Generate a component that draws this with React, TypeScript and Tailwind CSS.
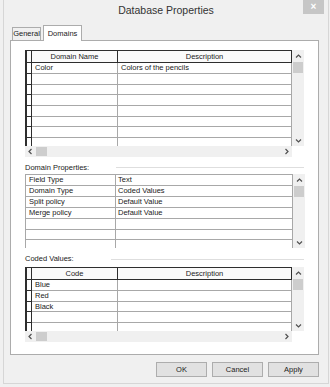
import React from "react";

type Dir = "up" | "down" | "left" | "right";

function Chevron({ dir }: { dir: Dir }) {
  const paths: Record<Dir, string> = {
    up: "M1 4.5 L3.5 2 L6 4.5",
    down: "M1 2.5 L3.5 5 L6 2.5",
    left: "M4.5 1 L2 3.5 L4.5 6",
    right: "M2.5 1 L5 3.5 L2.5 6",
  };
  return (
    <svg width="7" height="7" viewBox="0 0 7 7">
      <path d={paths[dir]} fill="none" stroke="#505050" strokeWidth="1.2" />
    </svg>
  );
}

function VScroll() {
  return (
    <div className="w-[12px] h-full flex flex-col bg-[#f0f0f0]">
      <div className="h-[12px] flex items-center justify-center">
        <Chevron dir="up" />
      </div>
      <div className="h-[11px] mx-[1px] bg-[#cdcdcd]" />
      <div className="flex-1" />
      <div className="h-[11px] flex items-center justify-center">
        <Chevron dir="down" />
      </div>
    </div>
  );
}

function HScroll() {
  return (
    <div className="flex-1 h-full flex bg-[#f0f0f0]">
      <div className="w-[11px] flex items-center justify-center">
        <Chevron dir="left" />
      </div>
      <div className="w-[11px] my-[1px] bg-[#cdcdcd]" />
      <div className="flex-1" />
      <div className="w-[11px] flex items-center justify-center">
        <Chevron dir="right" />
      </div>
    </div>
  );
}

const rowH = ["h-[11px]", "h-[11px]", "h-[10px]", "h-[11px]", "h-[11px]", "h-[10px]", "h-[11px]", "h-[11px]"];

function HeaderGrid({
  col1,
  col2,
  rows,
  height,
}: {
  col1: string;
  col2: string;
  rows: [string, string][];
  height: string;
}) {
  const all: [string, string][] = [...rows];
  while (all.length < 8) all.push(["", ""]);
  return (
    <div className={`flex flex-col ${height}`}>
      <div className="flex flex-1 min-h-0">
        <div className="w-[267px] overflow-hidden flex flex-col bg-white">
          <div className="flex h-[13px] shrink-0 border-y border-[#2e2e2e] bg-[#fafafa]">
            <div className="w-[7px] border-l-2 border-r border-[#2e2e2e]" />
            <div className="w-[86px] border-r border-[#2e2e2e] flex items-center justify-center">{col1}</div>
            <div className="flex-1 border-r border-[#2e2e2e] flex items-center justify-center">{col2}</div>
          </div>
          {all.map((r, i) => (
            <div key={i} className={`flex shrink-0 ${rowH[i]}`}>
              <div className="w-[7px] border-l-2 border-r border-b border-[#2e2e2e]" />
              <div className="w-[86px] border-r border-b border-[#a8a8a8] flex items-center pl-[3px]">{r[0]}</div>
              <div className="flex-1 border-r border-b border-[#a8a8a8] flex items-center pl-[3px]">{r[1]}</div>
            </div>
          ))}
        </div>
        <VScroll />
      </div>
      <div className="flex h-[11px]">
        <HScroll />
        <div className="w-[12px] bg-white" />
      </div>
    </div>
  );
}

function PropGrid() {
  const rows: [string, string][] = [
    ["Field Type", "Text"],
    ["Domain Type", "Coded Values"],
    ["Split policy", "Default Value"],
    ["Merge policy", "Default Value"],
    ["", ""],
    ["", ""],
    ["", ""],
  ];
  const hs = ["h-[11px]", "h-[11px]", "h-[11px]", "h-[11px]", "h-[11px]", "h-[10px]", "h-[10px]"];
  return (
    <div className="flex h-[74px]">
      <div className="w-[268px] overflow-hidden flex flex-col bg-white border-t border-l border-[#a8a8a8]">
        {rows.map((r, i) => (
          <div key={i} className={`flex shrink-0 ${hs[i]}`}>
            <div className={`w-[90px] border-r border-[#a8a8a8] flex items-center pl-[3px] ${i < 6 ? "border-b" : ""}`}>{r[0]}</div>
            <div className={`flex-1 border-r border-[#a8a8a8] flex items-center pl-[2px] ${i < 6 ? "border-b" : ""}`}>{r[1]}</div>
          </div>
        ))}
      </div>
      <div className="w-[11px] h-full">
        <VScroll />
      </div>
    </div>
  );
}

function Label({ text, lineW }: { text: string; lineW: string }) {
  return (
    <div className="flex items-center justify-between">
      <span>{text}</span>
      <div className={`${lineW} h-px bg-[#dedede]`} />
    </div>
  );
}

export default function App() {
  return (
    <div
      className="w-[330px] h-[387px] bg-[#f0f0f0] pl-[3px] pr-[1px] pb-[3px] text-[7.5px] leading-none text-[#1a1a1a]"
      style={{ fontFamily: '"Liberation Sans", Arial, sans-serif' }}
    >
      <div className="h-full flex flex-col border-l border-r border-b border-[#d6d6d6] bg-[#f0f0f0]">
        {/* title bar */}
        <div className="h-[22px] grid grid-cols-[1fr_auto_1fr] items-start">
          <div />
          <div className="pt-[5px] text-[10.5px] text-[#333333]">Database Properties</div>
          <div className="flex justify-end pr-[4px]">
            <div className="w-[21px] h-[14px] bg-[#c6c6c6] flex items-center justify-center text-white text-[10px] font-bold">
              ×
            </div>
          </div>
        </div>

        {/* tabs */}
        <div className="ml-[6px] flex flex-col">
          <div className="h-[18px] flex items-end pl-[2px] gap-[2px] pt-[3px]">
            <div className="w-[29px] h-[13px] border border-b-0 border-[#acacac] bg-[#f0f0f0] flex items-center justify-center">
              General
            </div>
            <div className="w-[39px] h-[16px] border border-b-0 border-[#acacac] bg-white flex items-center justify-center -mb-px relative z-10">
              Domains
            </div>
          </div>
          <div className="w-[309px] h-[315px] border border-[#acacac] bg-white px-[14px] pt-[9px] flex flex-col">
            <HeaderGrid
              col1="Domain Name"
              col2="Description"
              rows={[["Color", "Colors of the pencils"]]}
              height="h-[107px]"
            />
            <div className="h-[17px] pt-[4px] flex flex-col justify-center">
              <Label text="Domain Properties:" lineW="w-[188px]" />
            </div>
            <PropGrid />
            <div className="h-[19px] pt-[3px] flex flex-col justify-center">
              <Label text="Coded Values:" lineW="w-[193px]" />
            </div>
            <HeaderGrid
              col1="Code"
              col2="Description"
              rows={[
                ["Blue", ""],
                ["Red", ""],
                ["Black", ""],
              ]}
              height="h-[75px]"
            />
          </div>
        </div>

        {/* buttons */}
        <div className="mt-[7px] flex justify-end gap-[5px] pr-[9px]">
          {["OK", "Cancel", "Apply"].map((b) => (
            <div
              key={b}
              className="w-[51px] h-[15px] border border-[#adadad] bg-[#e1e1e1] flex items-center justify-center"
            >
              {b}
            </div>
          ))}
        </div>
      </div>
    </div>
  );
}
